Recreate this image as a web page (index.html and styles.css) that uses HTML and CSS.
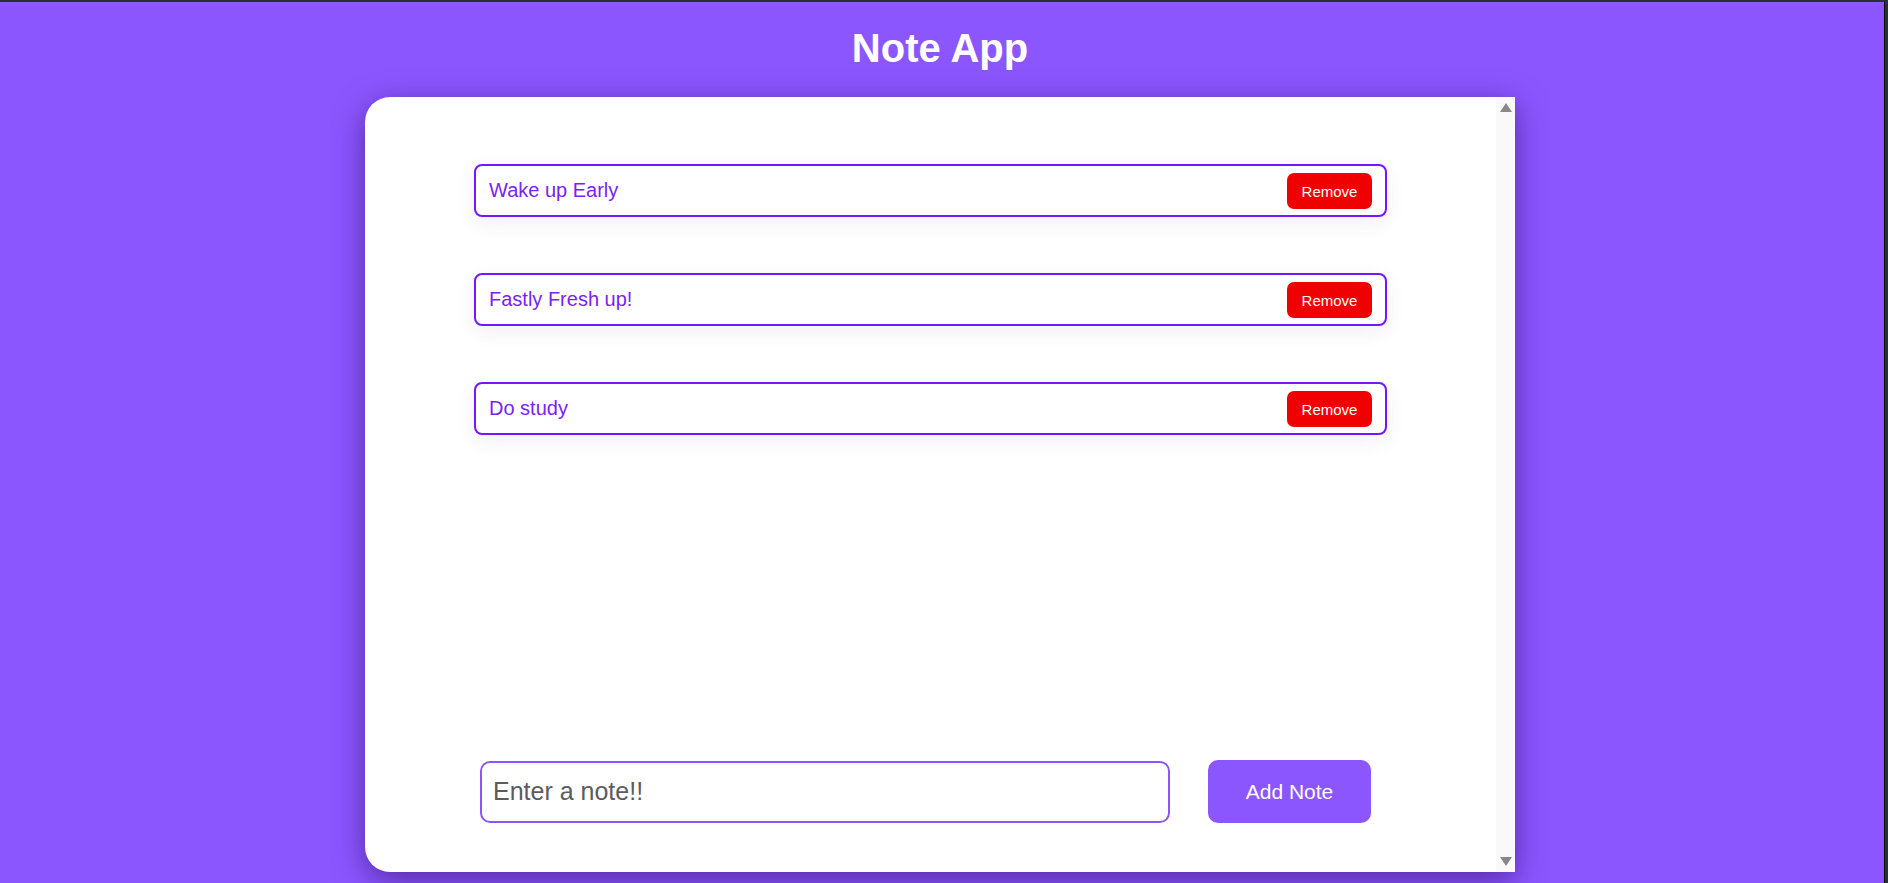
FILE: index.html
```html
<!DOCTYPE html>
<html lang="en">
<head>
<meta charset="utf-8">
<title>Note App</title>
<link rel="stylesheet" href="styles.css">
</head>
<body>
<div class="page">
  <h1 class="title">Note App</h1>
  <div class="card">
    <div class="card-body">
      <ul class="notes">
        <li class="note"><span class="note-text">Wake up Early</span><button class="remove">Remove</button></li>
        <li class="note"><span class="note-text">Fastly Fresh up!</span><button class="remove">Remove</button></li>
        <li class="note"><span class="note-text">Do study</span><button class="remove">Remove</button></li>
      </ul>
      <div class="composer">
        <input class="note-input" type="text" placeholder="Enter a note!!">
        <button class="add">Add Note</button>
      </div>
    </div>
    <div class="scrollbar">
      <span class="arrow up"></span>
      <span class="arrow down"></span>
    </div>
  </div>
</div>
</body>
</html>
```
FILE: styles.css
```css
html, body {
  margin: 0;
  padding: 0;
  height: 100%;
  background: #2c302c;
}
body {
  font-family: "Liberation Sans", Arial, sans-serif;
  overflow: hidden;
}
.page {
  box-sizing: border-box;
  height: 883px;
  width: 1885px;
  margin-top: 2px;
  border-right: 1px solid #000;
  padding-right: 4px;
  background: #8c56ff;
  display: flex;
  flex-direction: column;
  align-items: center;
  overflow: hidden;
}
.title {
  margin: 23px 0 26px;
  font-size: 40px;
  line-height: 46px;
  font-weight: bold;
  color: #ffffff;
}
.card {
  flex: none;
  width: 1150px;
  height: 775px;
  display: flex;
  background: #ffffff;
  border-radius: 25px 0 0 25px;
  box-shadow: 0 8px 30px rgba(30, 0, 80, 0.5);
}
.card-body {
  flex: 1;
  display: flex;
  flex-direction: column;
  align-items: center;
  padding: 67px 0 49px;
}
.notes {
  list-style: none;
  margin: 0;
  padding: 0;
  width: 913px;
  display: flex;
  flex-direction: column;
  gap: 56px;
  flex: 1;
}
.note {
  box-sizing: border-box;
  height: 53px;
  display: flex;
  align-items: center;
  justify-content: space-between;
  padding: 0 13px 0 13px;
  border: 2px solid #7417ff;
  border-radius: 8px;
  box-shadow: 0 6px 18px rgba(120, 80, 120, 0.09);
}
.note-text {
  font-size: 20px;
  color: #7a22f6;
}
.remove {
  width: 85px;
  height: 36px;
  border: none;
  border-radius: 7px;
  background: #f00000;
  color: #ffffff;
  font-family: "Liberation Sans", Arial, sans-serif;
  font-size: 15px;
  padding: 2px 0 0;
}
.composer {
  display: flex;
  align-items: center;
  gap: 38px;
  margin-left: -10px;
}
.note-input {
  box-sizing: border-box;
  width: 690px;
  height: 62px;
  border: 2px solid #8c56ff;
  border-radius: 10px;
  padding: 0 11px;
  font-family: "Liberation Sans", Arial, sans-serif;
  font-size: 25px;
  color: #333;
  outline: none;
}
.note-input::placeholder {
  color: #5c5c5c;
}
.add {
  width: 163px;
  height: 63px;
  border: none;
  border-radius: 10px;
  background: #8c56ff;
  color: #ffffff;
  font-family: "Liberation Sans", Arial, sans-serif;
  font-size: 21px;
  padding: 0;
}
.scrollbar {
  flex: none;
  width: 19px;
  background: #f9f9f9;
  display: flex;
  flex-direction: column;
  justify-content: space-between;
  align-items: center;
  padding: 6px 0 6px;
  box-sizing: border-box;
}
.arrow {
  width: 0;
  height: 0;
  border-left: 6px solid transparent;
  border-right: 6px solid transparent;
}
.arrow.up {
  border-bottom: 9px solid #888888;
}
.arrow.down {
  border-top: 9px solid #888888;
}
```
